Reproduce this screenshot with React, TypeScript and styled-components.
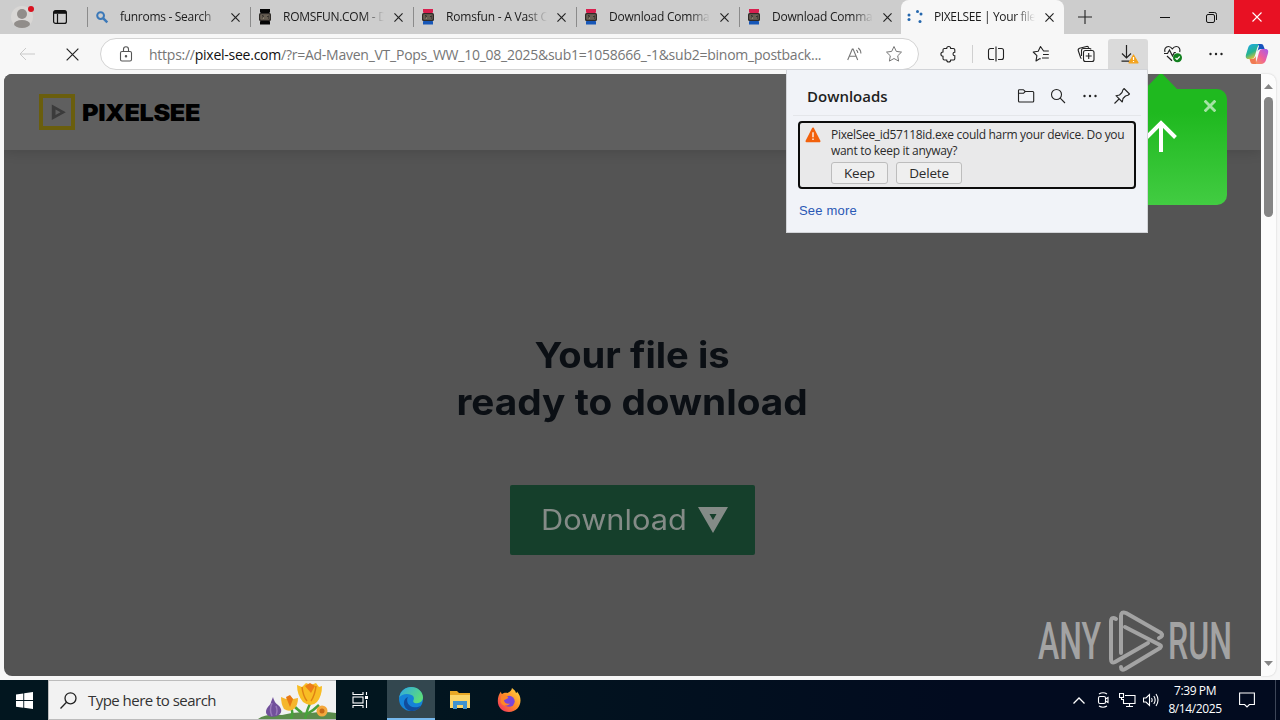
import React from 'react';
import styled, { createGlobalStyle } from 'styled-components';

const UI_FONT = `'Open Sans', 'Noto Sans', sans-serif`;
const TITLE_FONT = `Inter, 'Open Sans', sans-serif`;

interface TabItem {
  title: string;
  icon: React.ReactNode;
  spacing: number;
}

const SearchFavicon = () => (
  <Svg width="14" height="14" viewBox="0 0 14 14" stroke="#3b78b8" strokeWidth="2">
    <circle cx="5.6" cy="5.6" r="3.4" />
    <path d="M8.3 8.3l4 4" strokeWidth="2.4" />
  </Svg>
);

const ConsoleFavicon = ({ top, bottom }: { top: string; bottom: string }) => (
  <Svg width="14" height="18" viewBox="0 0 14 18">
    <path d="M2 1h10v3l-1 1.500H3L2 4z" fill={top} />
    <path d="M2 16.500h10v-3l-1-1.500H3l-1 1.500z" fill={bottom} />
    <rect x="1" y="5" width="12" height="8" rx="1.500" fill="#2f2b28" />
    <rect x="2.500" y="6.500" width="9" height="5" fill="#8f8270" />
    <path d="M4 7v4M4 7.500h1.500v1.500H4M7 7v4M9 11V7.500l.8 1.500.8-1.500V11" stroke="#2f2b28" strokeWidth=".8" />
  </Svg>
);

const LoadingFavicon = () => (
  <Svg width="18" height="16" viewBox="0 0 18 16" fill="#2467ad">
    <circle cx="3" cy="6" r="1.500" />
    <circle cx="3" cy="10.500" r="1.500" />
    <circle cx="11.500" cy="2.500" r="1.500" />
    <circle cx="15" cy="5" r="1.500" />
    <circle cx="14" cy="12.500" r="1.500" />
  </Svg>
);

const CloseIcon = ({ size = 9, color = '#222', width = 1.3 }) => (
  <Svg width={size} height={size} viewBox="0 0 10 10" stroke={color} strokeWidth={width}>
    <path d="M.5 .5l9 9M9.500 .5l-9 9" />
  </Svg>
);

const DotsIcon = () => (
  <Svg width="16" height="16" viewBox="0 0 16 16" fill="#222">
    <circle cx="2.500" cy="8" r="1.200" />
    <circle cx="8" cy="8" r="1.200" />
    <circle cx="13.500" cy="8" r="1.200" />
  </Svg>
);

const TABS: TabItem[] = [
  { title: 'funroms - Search', icon: <SearchFavicon />, spacing: -0.3 },
  { title: 'ROMSFUN.COM - D', icon: <ConsoleFavicon top="#050505" bottom="#050505" />, spacing: -0.27 },
  { title: 'Romsfun - A Vast C', icon: <ConsoleFavicon top="#d8204f" bottom="#1757b8" />, spacing: -0.2 },
  { title: 'Download Comman', icon: <ConsoleFavicon top="#d8204f" bottom="#1757b8" />, spacing: -0.22 },
  { title: 'Download Comman', icon: <ConsoleFavicon top="#d8204f" bottom="#1757b8" />, spacing: -0.22 },
];

const TabStrip = () => (
  <Strip>
    <StripStart>
      <Svg width="28" height="26" viewBox="0 0 28 26">
        <circle cx="12" cy="13" r="11" fill="#d9d7d5" />
        <circle cx="12" cy="10" r="5" fill="#918d8a" />
        <ellipse cx="12" cy="20" rx="8" ry="4" fill="#918d8a" />
        <circle cx="21" cy="5" r="3" fill="#d9121f" />
      </Svg>
      <Svg width="14" height="14" viewBox="0 0 14 14" stroke="#111" strokeWidth="1.200">
        <rect x=".6" y=".6" width="12.800" height="12.800" rx="2" />
        <path d="M1 2.300h12" strokeWidth="3" />
        <path d="M4.500 4v9.400" />
      </Svg>
    </StripStart>
    {TABS.map((tab, i) => (
      <Tab key={i}>
        <Favicon>{tab.icon}</Favicon>
        <TabTitle $spacing={tab.spacing}>{tab.title}</TabTitle>
        <CloseIcon />
      </Tab>
    ))}
    <Tab $active>
      <Favicon $wide>
        <LoadingFavicon />
      </Favicon>
      <TabTitle $spacing={-0.38}>PIXELSEE | Your file</TabTitle>
      <CloseIcon />
    </Tab>
    <NewTab>
      <Svg width="14" height="14" viewBox="0 0 14 14" stroke="#222" strokeWidth="1.100">
        <path d="M7 0v14M0 7h14" />
      </Svg>
    </NewTab>
    <WindowButton>
      <Svg width="10" height="10" viewBox="0 0 10 10" stroke="#111">
        <path d="M0 5.500h10" />
      </Svg>
    </WindowButton>
    <WindowButton>
      <Svg width="11" height="11" viewBox="0 0 11 11" stroke="#111">
        <rect x=".5" y="2.500" width="8" height="8" rx="1.500" />
        <path d="M2.800 .5H8.500a2 2 0 0 1 2 2V8" />
      </Svg>
    </WindowButton>
    <WindowButton $danger>
      <CloseIcon size={10} color="#fff" width={1.1} />
    </WindowButton>
  </Strip>
);

const Toolbar = () => (
  <Bar>
    <Slot $width={54}>
      <Svg width="16" height="14" viewBox="0 0 16 14" stroke="#c9c9c9">
        <path d="M16 7H1M7 1L1 7l6 6" />
      </Svg>
    </Slot>
    <Slot $width={36}>
      <CloseIcon size={13} width={0.9} />
    </Slot>
    <Address>
      <Svg width="14" height="16" viewBox="0 0 14 16" stroke="#555" strokeWidth="1.100">
        <rect x="1.500" y="5.500" width="11" height="9.500" rx="1.500" />
        <path d="M4.500 5.500V3.200a2.500 2.500 0 0 1 5 0v2.300" />
        <circle cx="7" cy="10.200" r=".7" fill="#555" />
      </Svg>
      <Url>
        https://<b>pixel-see.com</b>/?r=Ad-Maven_VT_Pops_WW_10_08_2025&amp;sub1=1058666_-1&amp;sub2=binom_postback...
      </Url>
      <Svg width="16" height="14" viewBox="0 0 16 14" stroke="#777" strokeWidth="1.100">
        <path d="M.7 13L5.300 2h.8l4.600 11M2.300 9.300h6.800M9.300 3c1 .7 1.500 1.700 1.500 3M11.200 1c1.800 1.300 2.700 3 2.700 5.500" />
      </Svg>
      <Svg width="18" height="18" viewBox="0 0 18 18" stroke="#777">
        <path d="M9 1.500l2.300 4.900 5.200.7-3.800 3.700.9 5.300L9 13.500l-4.600 2.600.9-5.300L1.500 7.100l5.200-.7z" />
      </Svg>
    </Address>
    <Slot $width={44}>
      <Svg width="18" height="18" viewBox="0 0 18 18" stroke="#222" strokeWidth="1.100">
        <path d="M4.200 3.500h2.500a2 2 0 0 1 4 0h2.600a1.500 1.500 0 0 1 1.500 1.500v2.200a1.800 1.800 0 0 0 0 3.600V13.500a1.500 1.500 0 0 1-1.500 1.500h-2.600a2 2 0 0 1-4 0H4.500A1.500 1.500 0 0 1 3 13.500v-2.300a2.100 2.100 0 0 1 0-4.200V5a1.400 1.400 0 0 1 1.200-1.500z" />
      </Svg>
    </Slot>
    <Divider />
    <Slot $width={44}>
      <Svg width="18" height="16" viewBox="0 0 18 16" stroke="#222" strokeWidth="1.100">
        <path d="M7 2.500H3.500a2 2 0 0 0-2 2v7a2 2 0 0 0 2 2H7M11 2.500h3.500a2 2 0 0 1 2 2v7a2 2 0 0 1-2 2H11M9 .5v15" />
      </Svg>
    </Slot>
    <Slot $width={46}>
      <Svg width="18" height="18" viewBox="0 0 18 18" stroke="#222" strokeWidth="1.100" strokeLinejoin="round">
        <path d="M16.800 6h-5.200L8.500 1.500 6.200 6.300l-5 .7 3.700 3.600-.9 5.300 4-2.300M11 9.500h5.800M10 13h6.800M8 13.600l.8.500" />
      </Svg>
    </Slot>
    <Slot $width={44}>
      <Svg width="18" height="18" viewBox="0 0 18 18" stroke="#222" strokeWidth="1.100">
        <rect x="6.500" y="5.500" width="10.500" height="11" rx="2" />
        <path d="M11.700 8v6M8.700 11h6M4.500 13.500a2 2 0 0 1-.9-1L1.300 5.800a2 2 0 0 1 1.300-2.500L9.500 1.500a2 2 0 0 1 2.300 1.200M4.500 11V5.500a2 2 0 0 1 2-2h6a2 2 0 0 1 1.700.8" />
      </Svg>
    </Slot>
    <DownloadSlot>
      <Svg width="24" height="20" viewBox="0 0 24 20" stroke="#222" strokeWidth="1.200">
        <path d="M10.500 1v13M6 9.500l4.500 4.500L15 9.500M5.500 17.200h8" />
        <path d="M17.500 11l4.500 7.800h-9z" fill="#f4a31c" stroke="#f4a31c" strokeLinejoin="round" />
        <path d="M17.500 13v3M17.500 17v1" stroke="#fff" />
      </Svg>
    </DownloadSlot>
    <Slot $width={50}>
      <Svg width="20" height="18" viewBox="0 0 20 18" stroke="#222" strokeWidth="1.200">
        <path d="M2 7C1 4.500 2.500 1.500 5.500 1.500c2 0 2.800 1 3.800 2.300 1-1.300 1.900-2.300 3.900-2.300 3.100 0 4.300 2.800 3.500 5.500M1 8.500h3.500L6.500 5l3 6 1.800-3.500h1.500M4 11l5 4.800" />
        <circle cx="14.500" cy="12.800" r="4.500" fill="#12801f" stroke="none" />
        <path d="M12.500 13l1.500 1.500 2.700-3" stroke="#fff" />
      </Svg>
    </Slot>
    <Slot $width={36}>
      <DotsIcon />
    </Slot>
    <Slot $width={46}>
      <Svg width="24" height="22" viewBox="0 0 24 22">
        <defs>
          <linearGradient id="copilotA" x1="0" y1="0" x2=".5" y2="1">
            <stop offset="0" stopColor="#1ba7f0" />
            <stop offset=".6" stopColor="#27b48e" />
            <stop offset="1" stopColor="#f0c430" />
          </linearGradient>
          <linearGradient id="copilotB" x1="1" y1="0" x2="0" y2="1">
            <stop offset="0" stopColor="#a45bee" />
            <stop offset=".5" stopColor="#ef5f9b" />
            <stop offset="1" stopColor="#f7a14a" />
          </linearGradient>
        </defs>
        <path d="M8 1h7.500c-2 .4-2.800 2.200-3.500 4.500l-2 7c-.7 2.400-1.800 3.500-4 3.500H3.500C.5 16 .4 13.500 1.200 11l2-6.500C4 2.200 5.500 1 8 1z" fill="url(#copilotA)" />
        <path d="M13 1h3c2 0 2.300 1.300 2.900 3l.8 2H16c-2 0-3.200 1-3.800 3L14 3z" fill="#1653bd" />
        <path d="M16 21H8.500c2-.4 2.800-2.200 3.500-4.500l2-7C14.700 7.100 15.800 6 18 6h2.500c3 0 3.100 2.500 2.300 5l-2 6.500c-.8 2.300-2.300 3.500-4.800 3.500z" fill="url(#copilotB)" />
        <path d="M11 21H8c-2 0-2.300-1.300-2.900-3L4.500 16H7c2 0 3.200-1 3.800-3z" fill="#f07a52" />
      </Svg>
    </Slot>
  </Bar>
);

const DownloadsPopup = () => (
  <Popup>
    <PopupHeader>
      <PopupTitle>Downloads</PopupTitle>
      <Svg width="18" height="16" viewBox="0 0 18 16" stroke="#222" strokeWidth="1.100">
        <path d="M1.500 2.500q0-.8.800-.8h4L8.200 3.500h7.500q1 0 1 1v8.500q0 1-1 1H2.500q-1 0-1-1zM1.500 5.300h5L8.200 3.500" />
      </Svg>
      <Svg width="16" height="16" viewBox="0 0 16 16" stroke="#222" strokeWidth="1.100">
        <circle cx="6.500" cy="6.500" r="5" />
        <path d="M10.200 10.200l4.800 4.800" />
      </Svg>
      <DotsIcon />
      <Svg width="18" height="18" viewBox="0 0 18 18" stroke="#222" strokeWidth="1.100" strokeLinejoin="round">
        <path d="M11 1.500l5.500 5.500-1.600 1.200-2.400.8-2.500 2.500-.7 3.500-6.300-6.300 3.500-.7L9 5.500l.8-2.400zM6 12l-4.500 4.500" />
      </Svg>
    </PopupHeader>
    <DownloadCard>
      <Svg width="16" height="16" viewBox="0 0 16 16">
        <path d="M8 1.500l6.500 12.800h-13z" fill="#f2610c" stroke="#f2610c" strokeWidth="2" strokeLinejoin="round" />
        <path d="M8 5.200v5M8 11.500v1.500" stroke="#fff" strokeWidth="1.300" />
      </Svg>
      <div>
        <Warning>
          PixelSee_id57118id.exe could harm your device. Do you
          <br />
          want to keep it anyway?
        </Warning>
        <Actions>
          <ActionBtn $width={57}>Keep</ActionBtn>
          <ActionBtn $width={66}>Delete</ActionBtn>
        </Actions>
      </div>
    </DownloadCard>
    <SeeMore>See more</SeeMore>
  </Popup>
);

const AnyRunMark = () => (
  <Watermark width="196" height="66" viewBox="0 0 196 66">
    <g fill="#a3a3a3" fontFamily="Roboto, sans-serif" fontSize="52" fontWeight="500">
      <text x="1" y="51" textLength="63" lengthAdjust="spacingAndGlyphs">ANY</text>
      <text x="131" y="51" textLength="64" lengthAdjust="spacingAndGlyphs">RUN</text>
    </g>
    <g fill="none" stroke="#a3a3a3" strokeWidth="4" strokeLinecap="round" strokeLinejoin="round">
      <path d="M79 11q-5-3-5 3v37q0 5 4 3l33-19" />
      <path d="M84 45V8q0-5 5-3l35 20q3 3-2 5" />
      <path d="M88 19l35 18q2 1 0 3L88 61q-4 2-4-2" />
    </g>
  </Watermark>
);

const Page = () => (
  <PageFrame>
    <PageView>
      <PageHeader>
        <Svg width="36" height="36" viewBox="0 0 36 36">
          <rect x="2" y="2" width="32" height="32" stroke="#6a5e0d" strokeWidth="4" />
          <path d="M12.800 10.500v15.500l14-7.700zM16.500 15.500l5 2.800-5 2.800z" fill="#3b3b3b" fillRule="evenodd" />
        </Svg>
        <Brand>PIXELSEE</Brand>
      </PageHeader>
      <Hero>
        <HeroLine $stretch={1.06}>Your file is</HeroLine>
        <HeroLine $stretch={1.077}>ready to download</HeroLine>
        <DownloadBtn>
          <DownloadLabel>Download</DownloadLabel>
          <Svg width="30" height="26" viewBox="0 0 30 26">
            <path d="M0 0h30L15 26zM11.500 7l3.500 6 3.500-6z" fill="#848b87" fillRule="evenodd" />
          </Svg>
        </DownloadBtn>
      </Hero>
      <Callout>
        <CalloutTip width="34" height="17" viewBox="0 0 34 17">
          <path d="M0 17L15 1.500q2-1.500 4 0L34 17z" fill="#1fb91f" />
        </CalloutTip>
        <CalloutClose>
          <CloseIcon size={12} color="#a3e3a3" width={2.4} />
        </CalloutClose>
        <Svg width="32" height="34" viewBox="0 0 32 34" stroke="#fff" strokeWidth="4">
          <path d="M16 32V3M1.500 17.500L16 3l14.500 14.500" />
        </Svg>
      </Callout>
      <AnyRunMark />
    </PageView>
    <Scrollbar>
      <Svg width="9" height="5" viewBox="0 0 9 5">
        <path d="M0 5l4.500-5L9 5z" fill="#858585" />
      </Svg>
      <Thumb />
      <Svg width="9" height="5" viewBox="0 0 9 5">
        <path d="M0 0l4.500 5L9 0z" fill="#858585" />
      </Svg>
    </Scrollbar>
  </PageFrame>
);

const Flowers = () => (
  <Svg width="78" height="38" viewBox="0 0 78 38">
    <path d="M0 38q8-6 24-4 15-4 28-2 14-2 26 0v7z" fill="#5b8c4b" />
    <path d="M33 38q3-8-1-14M47 38q2-10 6-17M44 32q-5-4-7-6M49 33q7-4 12-9" stroke="#47a13b" strokeWidth="2.500" />
    <path d="M15 16q1 5 5 8c5 4 4 9-1 11-5 2-11 0-11-4 0-5 5-7 5-10z" fill="#71509b" />
    <path d="M14 22q-3 7 0 13M18 25q2 5 0 9" stroke="#9879b9" strokeWidth="1.500" />
    <path d="M23 16l5 2 4-3 3 3 5-1q0 6-3 10-5 5-11 1-3-5-3-12z" fill="#f5b62c" />
    <path d="M28 16l4-2 3 4-3 8z" fill="#e77813" />
    <path d="M39 4l5 2 4-4 5 2 5-2 3 4 3-1q0 10-5 16-6 6-14 0-6-7-6-17z" fill="#f8bd24" />
    <path d="M44 6q1 9 5 14M58 5q-1 9-5 15" stroke="#df8314" strokeWidth="1.500" />
    <path d="M47 5l5-3 5 3-4 7z" fill="#ec7d19" />
    <circle cx="64" cy="30" r="5.500" fill="#f4a83d" />
    <circle cx="64" cy="30" r="2.500" fill="#c76a16" />
  </Svg>
);

const Taskbar = () => (
  <Task>
    <TaskButton>
      <Svg width="17" height="17" viewBox="0 0 17 17" fill="#fff">
        <path d="M0 2.400l7.300-1v6.700H0zM8.200 1.200L17 0v8.100H8.200zM0 9h7.300v6.700l-7.300-1zM8.200 9H17v8l-8.800-1.200z" />
      </Svg>
    </TaskButton>
    <SearchBox>
      <Svg width="17" height="17" viewBox="0 0 17 17" stroke="#222" strokeWidth="1.300">
        <circle cx="10.500" cy="6.300" r="5.500" />
        <path d="M6.500 10.300L.5 16.500" />
      </Svg>
      <SearchText>Type here to search</SearchText>
      <Flowers />
    </SearchBox>
    <TaskButton>
      <Svg width="17" height="16" viewBox="0 0 17 16" stroke="#fff" strokeWidth="1.100">
        <path d="M1 0v2.500h10V0M1 16v-2.500h10V16M14.500 0v3M14.500 8v8" />
        <rect x="1" y="5" width="10" height="6" />
        <path d="M14.500 4v3" strokeWidth="3" />
      </Svg>
    </TaskButton>
    <TaskButton $active $gap={3}>
      <Svg width="24" height="24" viewBox="0 0 24 24">
        <defs>
          <linearGradient id="edgeTop" x1="0" y1="0" x2="1" y2=".5">
            <stop offset="0" stopColor="#2ea6e6" />
            <stop offset="1" stopColor="#5bdc7c" />
          </linearGradient>
        </defs>
        <circle cx="12" cy="12" r="12" fill="#1583d8" />
        <path d="M.2 10.500C1.500 4 6.500 0 12.300 0 19 0 24 5 24 10.500c0 3.500-3 5.700-6 5.700-3.500 0-4.300-1.500-3.500-3 .8-1.600.7-4-2-5.200C8 6 2.500 7 .2 10.500z" fill="url(#edgeTop)" />
        <path d="M9 10c-2.500 4 .5 10.500 7 10.300 3 0 4.800-.8 6-1.600C20 22 16 24 12 24 7 23 4.500 19 5 15c.3-2.500 2-4.500 4-5z" fill="#114c9c" />
      </Svg>
    </TaskButton>
    <TaskButton $gap={1}>
      <Svg width="22" height="20" viewBox="0 0 22 20">
        <path d="M1 1h7l2 2h11v15H1z" fill="#e8a826" />
        <path d="M1 5h20v13H1z" fill="#fbd569" />
        <path d="M4 19v-8h14v8h-4v-4H8v4z" fill="#3f92cf" />
      </Svg>
    </TaskButton>
    <TaskButton $gap={1}>
      <Svg width="24" height="24" viewBox="0 0 24 24">
        <defs>
          <linearGradient id="foxFill" x1="1" y1="0" x2="0" y2="1">
            <stop offset="0" stopColor="#ffe045" />
            <stop offset=".5" stopColor="#ff8a26" />
            <stop offset="1" stopColor="#f0246a" />
          </linearGradient>
        </defs>
        <path d="M15 0c2 1.500 3.500 3 4 5 1-.2 1-1 1-1.500C22.500 6.500 23.500 9 23.500 12.500 23.500 19 18.500 24 12 24S.8 19.500.8 13C.8 9 2 6 4 3.500c0 1 .3 2 1 2.500C7 4.500 9 4.500 10.500 5 12.500 4 14.500 3 15 0z" fill="url(#foxFill)" />
        <circle cx="12.200" cy="13.300" r="5.500" fill="#7a45d8" />
        <path d="M4 8.500c2-2 5-1.500 7 .5 1 1-2 2.500-4 3 0 3 3 4.500 6 3.500-2 3-8 3-9.500-1.500z" fill="#ff8627" />
      </Svg>
    </TaskButton>
    <Spacer />
    <TrayIcon>
      <Svg width="12" height="7" viewBox="0 0 12 7" stroke="#fff" strokeWidth="1.300">
        <path d="M.5 6.500L6 1l5.500 5.500" />
      </Svg>
    </TrayIcon>
    <TrayIcon>
      <Svg width="12" height="16" viewBox="0 0 12 16" stroke="#fff" strokeWidth="1.100">
        <rect x="1.500" y="4.500" width="7" height="7" rx="1.500" />
        <path d="M8.500 7l2.500-1.500v5L8.500 9M2 2q4-2.500 8 0M2 14q4 2.500 8 0" />
      </Svg>
    </TrayIcon>
    <TrayIcon>
      <Svg width="17" height="14" viewBox="0 0 17 14" stroke="#fff" strokeWidth="1.100">
        <path d="M6 2.500h10v8H4.500V7M10.500 10.500v3M7 13.500h7M.5 .5h4v4h-4zM2.500 4.500v2H5" />
      </Svg>
    </TrayIcon>
    <TrayIcon>
      <Svg width="17" height="14" viewBox="0 0 17 14" stroke="#fff" strokeWidth="1.100">
        <path d="M.5 5h2.500L6.500 1.500v11L3 9H.5zM8.500 5q1.300 2 0 4M10.800 3q2.700 4 0 8M13 1q4 6 0 12" />
      </Svg>
    </TrayIcon>
    <Clock>
      <span>7:39 PM</span>
      <span>8/14/2025</span>
    </Clock>
    <Notice>
      <Svg width="16" height="17" viewBox="0 0 16 17" stroke="#fff" strokeWidth="1.100">
        <path d="M.6 1h14.800v11.500h-5L8 15l-2.400-2.500h-5z" />
      </Svg>
    </Notice>
  </Task>
);

const App: React.FC = () => (
  <>
    <GlobalStyle />
    <Screen>
      <TabStrip />
      <Toolbar />
      <Page />
      <DownloadsPopup />
      <Taskbar />
    </Screen>
  </>
);

export default App;

const GlobalStyle = createGlobalStyle`
  * {
    box-sizing: border-box;
  }

  body {
    margin: 0;
    overflow: hidden;
    font-family: ${UI_FONT};
  }
`;

const Svg = styled.svg.attrs((p) => ({ fill: p.fill ?? 'none' }))`
  display: block;
  flex-shrink: 0;
`;

const Screen = styled.div`
  position: relative;
  display: flex;
  flex-direction: column;
  width: 1280px;
  height: 720px;
  background: #f7f7f7;
`;

const Strip = styled.div`
  display: flex;
  height: 34px;
  background: #cdcdcd;
`;

const StripStart = styled.div`
  display: flex;
  align-items: center;
  gap: 15px;
  width: 87px;
  padding-left: 10px;
`;

const Tab = styled.div<{ $active?: boolean }>`
  display: flex;
  align-items: center;
  width: 163px;
  margin-left: ${({ $active }) => ($active ? '-1px' : '0')};
  border-radius: ${({ $active }) => ($active ? '8px 8px 0 0' : '0')};
  background: ${({ $active }) => ($active ? '#f7f7f7' : 'transparent')};

  &::before {
    content: '';
    width: 1px;
    height: 20px;
    background: ${({ $active }) => ($active ? 'transparent' : '#8b8b8b')};
  }
`;

const Favicon = styled.div<{ $wide?: boolean }>`
  display: flex;
  width: 32px;
  padding-left: ${({ $wide }) => ($wide ? '4px' : '7px')};
`;

const TabTitle = styled.div<{ $spacing: number }>`
  width: 101px;
  margin-right: 10px;
  overflow: hidden;
  white-space: nowrap;
  font-size: 12px;
  line-height: 18px;
  letter-spacing: ${({ $spacing }) => $spacing}px;
  color: #1b1b1b;
  mask-image: linear-gradient(90deg, #000 80%, transparent 100%);
`;

const NewTab = styled.div`
  display: flex;
  align-items: center;
  width: 78px;
  padding-left: 14px;
`;

const WindowButton = styled.div<{ $danger?: boolean }>`
  display: flex;
  align-items: center;
  justify-content: center;
  width: 46px;
  background: ${({ $danger }) => ($danger ? '#e81123' : 'transparent')};
`;

const Bar = styled.div`
  display: flex;
  align-items: center;
  height: 40px;
  background: #f7f7f7;
`;

const Slot = styled.div<{ $width: number }>`
  display: flex;
  flex-shrink: 0;
  align-items: center;
  justify-content: center;
  width: ${({ $width }) => $width}px;
`;

const DownloadSlot = styled.div`
  display: flex;
  flex-shrink: 0;
  align-items: center;
  justify-content: center;
  width: 40px;
  height: 30px;
  border-radius: 3px 3px 0 0;
  background: #dadada;
`;

const Divider = styled.div`
  width: 1px;
  height: 18px;
  margin: 0 1px;
  background: #d0d0d0;
`;

const Address = styled.div`
  display: flex;
  flex-shrink: 0;
  align-items: center;
  width: 819px;
  height: 32px;
  margin: 0 8px 0 10px;
  padding: 0 15px 0 18px;
  border: 1px solid #d3d3d3;
  border-radius: 16px;
  background: #fff;

  svg:last-child {
    margin-left: 22px;
  }
`;

const Url = styled.div`
  flex: 1;
  margin-left: 16px;
  white-space: nowrap;
  font-size: 14px;
  letter-spacing: -0.25px;
  color: #767676;

  b {
    font-weight: 400;
    color: #111;
  }
`;

const PageFrame = styled.div`
  display: flex;
  height: 606px;
  padding: 0 4px 4px;
`;

const PageView = styled.div`
  position: relative;
  width: 1257px;
  border-radius: 8px 0 0 8px;
  overflow: hidden;
  background: #545454;
`;

const PageHeader = styled.div`
  display: flex;
  align-items: center;
  gap: 7px;
  height: 76px;
  padding-left: 35px;
  background: #5f5f5f;
  box-shadow: 0 2px 12px rgba(0, 0, 0, 0.14);
`;

const Brand = styled.div`
  font-family: ${TITLE_FONT};
  font-size: 23px;
  font-weight: 900;
  letter-spacing: -0.4px;
  color: #000;
  transform: translateY(1px) scaleX(1.1);
  transform-origin: left;
`;

const Hero = styled.div`
  display: flex;
  flex-direction: column;
  align-items: center;
  padding-top: 182px;
`;

// Inter runs narrower than the heading face, so each line is stretched a little
const HeroLine = styled.div<{ $stretch: number }>`
  font-family: ${TITLE_FONT};
  font-size: 36px;
  font-weight: 700;
  line-height: 47px;
  color: #0b0f14;
  transform: scaleX(${({ $stretch }) => $stretch});
`;

const DownloadBtn = styled.div`
  display: flex;
  align-items: center;
  width: 245px;
  height: 70px;
  margin-top: 59px;
  padding-left: 31px;
  border-radius: 2px;
  background: #153f2b;
`;

const DownloadLabel = styled.div`
  width: 157px;
  font-family: ${TITLE_FONT};
  font-size: 28px;
  color: #848b87;

  transform: scaleX(1.1);
  transform-origin: left;
`;

const Callout = styled.div`
  position: absolute;
  top: 15px;
  right: 34px;
  display: flex;
  justify-content: center;
  width: 133px;
  height: 116px;
  padding-top: 31px;
  border-radius: 10px;
  background: linear-gradient(#1fb91f 20%, #42cc42);
`;

const CalloutTip = styled(Svg)`
  position: absolute;
  top: -16px;
  left: 50px;
`;

const CalloutClose = styled.div`
  position: absolute;
  top: 11px;
  right: 11px;
`;

const Watermark = styled(Svg)`
  position: absolute;
  right: 28px;
  bottom: 2px;
`;

const Scrollbar = styled.div`
  display: flex;
  flex-direction: column;
  align-items: center;
  width: 15px;
  padding: 10px 0;
  border-radius: 0 8px 8px 0;
  background: #fcfcfc;
  box-shadow: 0 0 2px rgba(0, 0, 0, 0.2);
`;

const Thumb = styled.div`
  width: 9px;
  height: 120px;
  margin: 8px 0 auto;
  border-radius: 5px;
  background: #858585;
`;

const Popup = styled.div`
  position: absolute;
  top: 69px;
  left: 786px;
  width: 362px;
  height: 164px;
  border: 1px solid #d2d4d8;
  background: #f1f3f8;
`;

const PopupHeader = styled.div`
  display: flex;
  align-items: center;
  height: 46px;
  margin: 0 6px;
  padding: 6px 10px 0 14px;
  gap: 15.5px;
  border-bottom: 1px solid #e4e6ea;
`;

const PopupTitle = styled.div`
  flex: 1;
  font-size: 15px;
  font-weight: 600;
  color: #1f1f1f;
`;

const DownloadCard = styled.div`
  display: flex;
  gap: 10px;
  width: 338px;
  height: 68px;
  margin: 5px 0 0 11px;
  padding: 4px 5px;
  border: 2px solid #0c0c0c;
  border-radius: 4px;
  background: #e9e9ea;
`;

const Warning = styled.div`
  white-space: nowrap;
  font-size: 12px;
  line-height: 16px;
  letter-spacing: -0.31px;
  color: #2b2b2b;
`;

const Actions = styled.div`
  display: flex;
  gap: 8px;
  margin-top: 3px;
`;

const ActionBtn = styled.div<{ $width: number }>`
  width: ${({ $width }) => $width}px;
  height: 22px;
  border: 1px solid #bdbdbd;
  border-radius: 3px;
  background: #efefef;
  font-size: 13.5px;
  line-height: 20px;
  letter-spacing: -0.2px;
  text-align: center;
  color: #2b2b2b;
`;

const SeeMore = styled.div`
  margin: 14px 0 0 12px;
  font-family: 'Liberation Sans', Arial, sans-serif;
  font-size: 13px;
  letter-spacing: 0.2px;
  color: #2a58b5;
`;

const Task = styled.div`
  display: flex;
  height: 40px;
  background: linear-gradient(90deg, #02161f 30%, #020b1f 75%);
`;

const TaskButton = styled.div<{ $active?: boolean; $gap?: number }>`
  display: flex;
  align-items: center;
  justify-content: center;
  width: 48px;
  margin-left: ${({ $gap = 0 }) => $gap}px;
  border-bottom: ${({ $active }) => ($active ? '2px solid #76b9ed' : 'none')};
  background: ${({ $active }) => ($active ? '#33474f' : 'transparent')};
`;

const SearchBox = styled.div`
  display: flex;
  align-items: center;
  width: 288px;
  padding-left: 11px;
  border: 1px solid #bcbcbc;
  border-right: none;
  background: #f2f2f2;
`;

const SearchText = styled.div`
  flex: 1;
  margin-left: 11px;
  font-size: 15px;
  letter-spacing: -0.53px;
  color: #333;
`;

const Spacer = styled.div`
  flex: 1;
`;

const TrayIcon = styled.div`
  display: flex;
  align-items: center;
  justify-content: center;
  width: 24px;
`;

const Clock = styled.div`
  display: flex;
  flex-direction: column;
  justify-content: center;
  align-items: center;
  width: 64px;
  font-size: 12px;
  line-height: 18px;
  letter-spacing: -0.4px;
  color: #fff;
`;

const Notice = styled.div`
  display: flex;
  align-items: center;
  width: 49px;
  margin-right: 4px;
  padding-left: 12px;
  border-right: 1px solid #3d4658;
`;
